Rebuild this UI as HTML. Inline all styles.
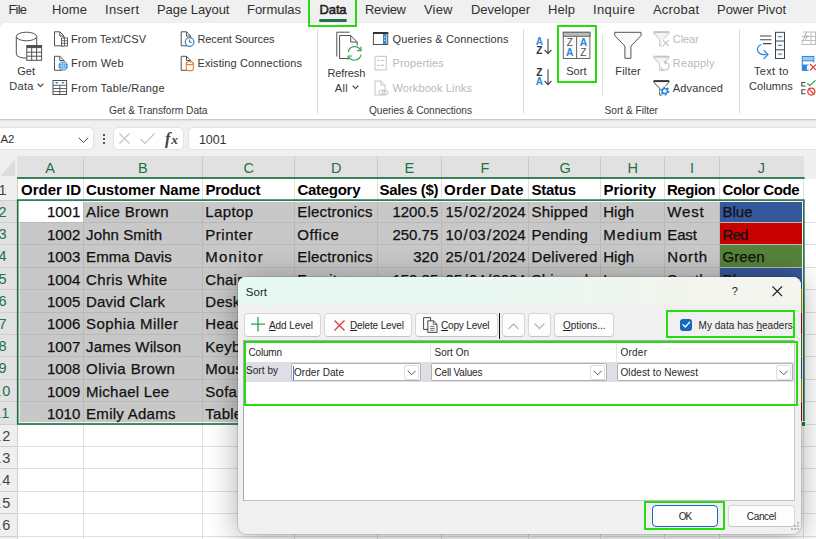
<!DOCTYPE html>
<html><head><meta charset="utf-8"><title>Excel Sort</title>
<style>
*{box-sizing:border-box;margin:0;padding:0}
html,body{width:816px;height:539px;overflow:hidden;background:#fff;font-family:"Liberation Sans",sans-serif}
#root{position:relative;width:816px;height:539px;overflow:hidden;background:#f0f0f0}
.a{position:absolute}
.t{position:absolute;white-space:pre;height:20px;line-height:20px}
svg{position:absolute;overflow:visible}
.tabbar{left:0;top:0;width:816px;height:24px;background:#f0f0f0}
.ribbon{left:0;top:23.2px;width:830px;height:95.8px;background:#fff;border-top-left-radius:5px;box-shadow:0 1px 2px rgba(0,0,0,.22)}
.vsep{width:1px;background:#dcdcdc}
.fbox{background:#fff;border:1px solid #e2e2e2;border-radius:5px;height:23px;top:127px}
.hl{border:2px solid #26dd0c}
/* grid */
.colh{top:156px;height:21px;background:#e1e1e1}
.rowh{left:0;width:17px;background:#e1e1e1}
.cell{position:absolute}
/* dialog */
.dlg{left:238px;top:276.8px;width:563px;height:257.5px;background:#f0f0f0;border-radius:8px;box-shadow:0 0 0 .6px rgba(0,0,0,.22),0 3px 30px 2px rgba(0,0,0,.30);overflow:hidden}
.btn{position:absolute;background:#fdfdfd;border:1px solid #d6d6d6;border-bottom-color:#c4c4c4;border-radius:4px}
.combo{position:absolute;background:#fff;border:1px solid #b0b0b0;border-radius:2px;height:18.3px;top:363px}
.combo i{position:absolute;right:.6px;top:.6px;bottom:.6px;width:15.6px;border:1px solid #dedede;border-radius:2px;background:#fff}
</style></head><body><div id="root">
<div class="a tabbar"></div>
<div class="a ribbon"></div>
<div class="a" style="left:319.1px;top:19.2px;width:28.4px;height:2.7px;border-radius:2px;background:#217346"></div>
<div class="a hl" style="left:308.4px;top:-4px;width:48.5px;height:30.7px"></div>
<div class="a vsep" style="left:317px;top:29px;height:85px"></div>
<div class="a vsep" style="left:523px;top:29px;height:85px"></div>
<div class="a vsep" style="left:739px;top:29px;height:85px"></div>
<div class="a vsep" style="left:602px;top:34px;height:61px;background:#e0e0e0"></div>
<div class="a hl" style="left:556.5px;top:25px;width:40.5px;height:58px"></div>
<svg style="left:37px;top:83.4px" width="7" height="4.6"><path d="M1 1 L3.5 3.6 L6 1" fill="none" stroke="#444" stroke-width="1.1" stroke-linecap="round" stroke-linejoin="round"/></svg>
<svg style="left:351.5px;top:85.4px" width="7" height="4.6"><path d="M1 1 L3.5 3.6 L6 1" fill="none" stroke="#444" stroke-width="1.1" stroke-linecap="round" stroke-linejoin="round"/></svg>
<svg style="left:0;top:0" width="816" height="120" viewBox="0 0 816 120"><path d="M16.3 36.5 V54 C16.3 59.5 36.7 59.5 36.7 54 V36.5" fill="#fff" stroke="#505050" stroke-width="1"/><ellipse cx="26.5" cy="36.5" rx="10.2" ry="4.3" fill="#fff" stroke="#505050" stroke-width="1"/><rect x="26.8" y="45.5" width="14.8" height="14.8" fill="#fff" stroke="#505050" stroke-width="1"/><rect x="26.8" y="45.5" width="14.8" height="2.6" fill="#505050"/><path d="M31.7 48 V60.3 M36.6 48 V60.3 M26.8 52.2 H41.6 M26.8 56.2 H41.6" stroke="#505050" stroke-width="1" fill="none"/><path d="M54.5 31.8 H59.8 L64.0 36.0 V45.8 H54.5 Z" fill="#fff" stroke="#505050" stroke-width="1" stroke-linejoin="round"/><path d="M59.8 31.8 V36.0 H64.0" fill="none" stroke="#505050" stroke-width="1" stroke-linejoin="round"/><rect x="61.5" y="38" width="6" height="8" fill="#fff" stroke="#505050" stroke-width=".9"/><path d="M61.5 40.7 H67.5 M61.5 43.3 H67.5 M64.5 38 V46" stroke="#505050" stroke-width=".8"/><path d="M54.5 56.3 H59.8 L64.0 60.5 V70.3 H54.5 Z" fill="#fff" stroke="#505050" stroke-width="1" stroke-linejoin="round"/><path d="M59.8 56.3 V60.5 H64.0" fill="none" stroke="#505050" stroke-width="1" stroke-linejoin="round"/><circle cx="63.2" cy="66" r="4.7" fill="#2b88d8"/><path d="M58.5 66 H67.9 M63.2 61.3 V70.7 M60 63.3 Q63.2 64.8 66.4 63.3 M60 68.7 Q63.2 67.2 66.4 68.7" stroke="#fff" stroke-width=".55" fill="none"/><ellipse cx="63.2" cy="66" rx="2.1" ry="4.7" fill="none" stroke="#fff" stroke-width=".55"/><rect x="53" y="80.5" width="13.6" height="14" fill="#fff" stroke="#505050" stroke-width="1"/><path d="M53 85.3 H66.6 M53 88.5 H66.6 M53 91.6 H66.6 M59.8 85.3 V94.5" stroke="#505050" stroke-width=".9"/><path d="M55 82 H58.2 L56.6 84 Z M61.4 82 H64.6 L63 84 Z" fill="#2b88d8"/><path d="M181.2 31.8 H186.5 L190.7 36.0 V45.8 H181.2 Z" fill="#fff" stroke="#505050" stroke-width="1" stroke-linejoin="round"/><path d="M186.5 31.8 V36.0 H190.7" fill="none" stroke="#505050" stroke-width="1" stroke-linejoin="round"/><circle cx="189.6" cy="42" r="4.3" fill="#fff" stroke="#2b88d8" stroke-width="1.2"/><path d="M189.6 39.5 V42.2 H191.8" stroke="#505050" stroke-width=".9" fill="none"/><path d="M181.2 56.3 H186.5 L190.7 60.5 V70.3 H181.2 Z" fill="#fff" stroke="#505050" stroke-width="1" stroke-linejoin="round"/><path d="M186.5 56.3 V60.5 H190.7" fill="none" stroke="#505050" stroke-width="1" stroke-linejoin="round"/><path d="M186.3 63.3 V69.3 C186.3 71.3 193.3 71.3 193.3 69.3 V63.3" fill="#fff" stroke="#e07b26" stroke-width="1.1"/><ellipse cx="189.8" cy="63.3" rx="3.5" ry="1.6" fill="#fff" stroke="#e07b26" stroke-width="1.1"/><path d="M336.8 56.5 V32.2 H349.5" fill="none" stroke="#505050" stroke-width="1"/><path d="M339.6 35.5 H350.70000000000005 L357.20000000000005 42.0 V58.5 H339.6 Z" fill="#fff" stroke="#505050" stroke-width="1" stroke-linejoin="round"/><path d="M350.70000000000005 35.5 V42.0 H357.20000000000005" fill="none" stroke="#505050" stroke-width="1" stroke-linejoin="round"/><circle cx="354.6" cy="53.3" r="8.3" fill="#fff"/><path d="M348.2 52 A6.6 6.6 0 0 1 360.6 50.2" fill="none" stroke="#37a556" stroke-width="1.2"/><path d="M361 46.5 V50.6 H357" fill="none" stroke="#37a556" stroke-width="1.2"/><path d="M361 54.6 A6.6 6.6 0 0 1 348.6 56.4" fill="none" stroke="#37a556" stroke-width="1.2"/><path d="M348.2 60.1 V56 H352.2" fill="none" stroke="#37a556" stroke-width="1.2"/><rect x="373.4" y="33" width="14.3" height="11.5" fill="#fff" stroke="#505050" stroke-width="1"/><rect x="373" y="32" width="15.2" height="2" fill="#333"/><rect x="383" y="34" width="3.4" height="10" fill="#2b88d8"/><path d="M384.7 36.5 V38 M384.7 39.6 V41" stroke="#fff" stroke-width=".9"/><rect x="375" y="56.3" width="11.2" height="13.6" fill="#fff" stroke="#c4c4c4" stroke-width="1"/><path d="M377.3 60.5 H379.5 M380.8 60.5 H384 M377.3 65.3 H379.5 M380.8 65.3 H384" stroke="#c4c4c4" stroke-width="1.2"/><path d="M375 81 H380.8 L385 85.2 V95 H375 Z" fill="#fff" stroke="#c4c4c4" stroke-width="1" stroke-linejoin="round"/><path d="M380.8 81 V85.2 H385" fill="none" stroke="#c4c4c4" stroke-width="1" stroke-linejoin="round"/><ellipse cx="381.5" cy="92.2" rx="3" ry="2.2" fill="#fff" stroke="#c4c4c4" stroke-width="1"/><ellipse cx="385" cy="92.6" rx="3" ry="2.2" fill="none" stroke="#c4c4c4" stroke-width="1"/><text x="539.4" y="45.4" font-family="Liberation Sans" font-size="10" font-weight="700" fill="#2b88d8" text-anchor="middle">A</text><text x="539.4" y="54" font-family="Liberation Sans" font-size="10" font-weight="700" fill="#333" text-anchor="middle">Z</text><path d="M548 38.7 V53.6 M544.6 50.0 L548 53.6 L551.4 50.0" fill="none" stroke="#444" stroke-width="1.1"/><text x="539.4" y="76" font-family="Liberation Sans" font-size="10" font-weight="700" fill="#333" text-anchor="middle">Z</text><text x="539.4" y="84.8" font-family="Liberation Sans" font-size="10" font-weight="700" fill="#2b88d8" text-anchor="middle">A</text><path d="M548 69.3 V84.6 M544.6 81.0 L548 84.6 L551.4 81.0" fill="none" stroke="#444" stroke-width="1.1"/><rect x="563.3" y="32.3" width="26.6" height="26.2" fill="#fafafa" stroke="#666" stroke-width="1"/><rect x="563.3" y="32.3" width="26.6" height="4" fill="#bcbcbc" stroke="#666" stroke-width="1"/><path d="M576.6 36.3 V58.5" stroke="#666" stroke-width="1"/><text x="569.8" y="46.3" font-family="Liberation Sans" font-size="10" font-weight="400" fill="#505050" text-anchor="middle">Z</text><text x="569.8" y="56.2" font-family="Liberation Sans" font-size="10.2" font-weight="700" fill="#2b88d8" text-anchor="middle">A</text><text x="583.4" y="46.3" font-family="Liberation Sans" font-size="10.2" font-weight="700" fill="#2b88d8" text-anchor="middle">A</text><text x="583.4" y="56.2" font-family="Liberation Sans" font-size="10" font-weight="400" fill="#505050" text-anchor="middle">Z</text><path d="M614.8 32.3 H641.0 V35.68 L630.913 46.08 V58.3 H624.887 V46.08 L614.8 35.68 Z" fill="#fafafa" stroke="#555" stroke-width="1" stroke-linejoin="round"/><path d="M654 31.8 H668.8 V33.646 L663.102 39.326 V46.0 H659.698 V39.326 L654 33.646 Z" fill="#f4f4f4" stroke="#c4c4c4" stroke-width="1" stroke-linejoin="round"/><path d="M653.6 32.2 H669.2" stroke="#c4c4c4" stroke-width="1.7"/><rect x="661.8" y="39.3" width="8" height="7.4" fill="#fff"/><path d="M663 40.2 L668.8 46 M668.8 40.2 L663 46" stroke="#c4c4c4" stroke-width="1.1"/><path d="M654 56.3 H668.8 V58.145999999999994 L663.102 63.82599999999999 V70.5 H659.698 V63.82599999999999 L654 58.145999999999994 Z" fill="#f4f4f4" stroke="#c4c4c4" stroke-width="1" stroke-linejoin="round"/><path d="M653.6 56.7 H669.2" stroke="#c4c4c4" stroke-width="1.7"/><circle cx="665" cy="66.2" r="4.8" fill="#fff"/><path d="M661.2 66.9 A3.9 3.9 0 1 0 665 62.3" fill="none" stroke="#c4c4c4" stroke-width="1.1"/><path d="M666 60.5 L664.2 62.4 L666.2 64" fill="none" stroke="#c4c4c4" stroke-width="1.1"/><path d="M654 80.8 H668.8 V82.646 L663.102 88.326 V95.0 H659.698 V88.326 L654 82.646 Z" fill="#fff" stroke="#444" stroke-width="1" stroke-linejoin="round"/><path d="M653.6 81.2 H669.2" stroke="#333" stroke-width="1.7"/><circle cx="664.8" cy="91" r="5.2" fill="#fff"/><circle cx="664.8" cy="91" r="3.5" fill="none" stroke="#2b88d8" stroke-width="2.2" stroke-dasharray="1.7 1.97"/><circle cx="664.8" cy="91" r="2.6" fill="none" stroke="#2b88d8" stroke-width="1.5"/><path d="M760 36 H771.4 M760 39.8 H771.4 M763 43.6 H771.4" stroke="#444" stroke-width="1.1"/><path d="M761.5 44.5 C755.5 47 755.5 55.2 766.8 54.6" fill="none" stroke="#2b88d8" stroke-width="1.2"/><path d="M763.6 50.3 L768 54.6 L763.6 59" fill="none" stroke="#2b88d8" stroke-width="1.2"/><rect x="775.5" y="32.3" width="9" height="26.2" fill="#fafafa" stroke="#444" stroke-width="1"/><path d="M775.5 41 H784.5 M775.5 49.8 H784.5" stroke="#444" stroke-width="1"/><path d="M778.3 36.7 H781.8 M778.3 45.4 H781.8 M778.3 54.2 H781.8" stroke="#2b88d8" stroke-width="1.3"/><path d="M801.5 44.5 H818 M801.5 40.5 H818 M801.5 36.5 H818 M806.5 32 L801.5 44.5 M811 32 V44.5 M815.5 32 V44.5 M803 32 H818" stroke="#bdbdbd" stroke-width="1" fill="none"/><path d="M803 37.5 L806.5 31.5 L806 35.5 L809 35 L805 41 L805.6 37 Z" fill="#bdbdbd"/><rect x="802.3" y="56.5" width="11.5" height="13.8" fill="#fff" stroke="#2b88d8" stroke-width="1.1"/><rect x="802.8" y="57" width="10.5" height="3.6" fill="#9ccaf0"/><path d="M802.3 60.8 H813.8 M802.3 65 H813.8" stroke="#2b88d8" stroke-width="1"/><rect x="802.3" y="65" width="4.6" height="5.3" fill="#2b88d8"/><rect x="808.6" y="62.6" width="9" height="9" fill="#fff"/><path d="M810 64 L816.5 70.5 M816.5 64 L810 70.5" stroke="#e53935" stroke-width="1.2"/><path d="M805.5 82.5 H801.8 V86 H805.5 M805.5 89.8 H801.8 V93.8 H805.5" fill="none" stroke="#444" stroke-width="1.1"/><path d="M807.3 83.3 L809.8 85.6 L815.5 80.2" fill="none" stroke="#35a44f" stroke-width="1.2"/><circle cx="811.3" cy="91.6" r="3.5" fill="#fff" stroke="#e53935" stroke-width="1.2"/><path d="M808.9 89.2 L813.7 94" stroke="#e53935" stroke-width="1.2"/></svg>
<div class="a fbox" style="left:-6px;width:100px"></div>
<div class="a fbox" style="left:113px;width:70.5px"></div>
<div class="a fbox" style="left:188px;width:640px"></div>
<svg style="left:78.3px;top:137.3px" width="11" height="6.5"><path d="M1 1 L5.5 5.5 L10 1" fill="none" stroke="#444" stroke-width="1" stroke-linecap="round" stroke-linejoin="round"/></svg>
<div class="a" style="left:102.5px;top:133.5px;width:2px;height:2px;background:#555"></div>
<div class="a" style="left:102.5px;top:137.5px;width:2px;height:2px;background:#555"></div>
<div class="a" style="left:102.5px;top:141.5px;width:2px;height:2px;background:#555"></div>
<svg style="left:119px;top:133px" width="11" height="11"><path d="M0.5 0.5 L10.5 10.5 M10.5 0.5 L0.5 10.5" stroke="#c2c2c2" stroke-width="1.1" fill="none"/></svg>
<svg style="left:140px;top:133px" width="15" height="11"><path d="M0.5 6 L5 10.5 L14.5 0.5" stroke="#c2c2c2" stroke-width="1.1" fill="none"/></svg>
<div class="a" style="left:17px;top:179px;width:800px;height:360px;background:#fff"></div>
<div class="a" style="left:0;top:156px;width:816px;height:23px;background:#efefef"></div>
<div class="a colh" style="left:17px;width:787.3px"></div>
<div class="a" style="left:0;top:156px;width:17px;height:23px;background:#efefef"></div>
<svg style="left:0;top:156px" width="17" height="22"><path d="M15 4 L15 20 L0 20 Z" fill="#dcdcdc"/></svg>
<div class="a" style="left:0;top:179px;width:17px;height:360px;background:#efefef"></div>
<div class="a rowh" style="top:200.0px;height:224.0px"></div>
<div class="a" style="left:16.5px;top:179px;width:1px;height:21px;background:#cfcfcf"></div>
<div class="a" style="left:16.5px;top:424.0px;width:1px;height:200px;background:#cfcfcf"></div>
<div class="a" style="left:18.4px;top:200.8px;width:784.5px;height:222.39999999999998px;background:#c8c8c8"></div>
<div class="a" style="left:18.4px;top:200.8px;width:64.4px;height:21.099999999999994px;background:#fff"></div>
<div class="a" style="left:719.6px;top:201.9px;width:82.29999999999995px;height:20.5px;background:#35589a"></div>
<div class="a" style="left:719.6px;top:222.4px;width:82.29999999999995px;height:22.400000000000006px;background:#c70000"></div>
<div class="a" style="left:719.6px;top:244.8px;width:82.29999999999995px;height:22.399999999999977px;background:#56833a"></div>
<div class="a" style="left:719.6px;top:267.2px;width:82.29999999999995px;height:22.400000000000034px;background:#35589a"></div>
<div class="a" style="left:719.6px;top:289.6px;width:82.29999999999995px;height:22.399999999999977px;background:#c79a00"></div>
<div class="a" style="left:719.6px;top:312.0px;width:82.29999999999995px;height:22.399999999999977px;background:#c70000"></div>
<div class="a" style="left:719.6px;top:334.4px;width:82.29999999999995px;height:22.399999999999977px;background:#56833a"></div>
<div class="a" style="left:719.6px;top:356.79999999999995px;width:82.29999999999995px;height:22.400000000000034px;background:#35589a"></div>
<div class="a" style="left:719.6px;top:379.2px;width:82.29999999999995px;height:22.400000000000034px;background:#c79a00"></div>
<div class="a" style="left:719.6px;top:401.6px;width:82.29999999999995px;height:20.599999999999966px;background:#c70000"></div>
<div class="a" style="left:82.8px;top:179px;width:1px;height:21px;background:#e0e0e0"></div>
<div class="a" style="left:82.8px;top:201.0px;width:1px;height:222.0px;background:#b9b9b9"></div>
<div class="a" style="left:82.8px;top:425.0px;width:1px;height:200px;background:#e0e0e0"></div>
<div class="a" style="left:82.8px;top:157px;width:1px;height:20px;background:#c8c8c8"></div>
<div class="a" style="left:202.0px;top:179px;width:1px;height:21px;background:#e0e0e0"></div>
<div class="a" style="left:202.0px;top:201.0px;width:1px;height:222.0px;background:#b9b9b9"></div>
<div class="a" style="left:202.0px;top:425.0px;width:1px;height:200px;background:#e0e0e0"></div>
<div class="a" style="left:202.0px;top:157px;width:1px;height:20px;background:#c8c8c8"></div>
<div class="a" style="left:294.0px;top:179px;width:1px;height:21px;background:#e0e0e0"></div>
<div class="a" style="left:294.0px;top:201.0px;width:1px;height:222.0px;background:#b9b9b9"></div>
<div class="a" style="left:294.0px;top:425.0px;width:1px;height:200px;background:#e0e0e0"></div>
<div class="a" style="left:294.0px;top:157px;width:1px;height:20px;background:#c8c8c8"></div>
<div class="a" style="left:376.8px;top:179px;width:1px;height:21px;background:#e0e0e0"></div>
<div class="a" style="left:376.8px;top:201.0px;width:1px;height:222.0px;background:#b9b9b9"></div>
<div class="a" style="left:376.8px;top:425.0px;width:1px;height:200px;background:#e0e0e0"></div>
<div class="a" style="left:376.8px;top:157px;width:1px;height:20px;background:#c8c8c8"></div>
<div class="a" style="left:440.8px;top:179px;width:1px;height:21px;background:#e0e0e0"></div>
<div class="a" style="left:440.8px;top:201.0px;width:1px;height:222.0px;background:#b9b9b9"></div>
<div class="a" style="left:440.8px;top:425.0px;width:1px;height:200px;background:#e0e0e0"></div>
<div class="a" style="left:440.8px;top:157px;width:1px;height:20px;background:#c8c8c8"></div>
<div class="a" style="left:528.2px;top:179px;width:1px;height:21px;background:#e0e0e0"></div>
<div class="a" style="left:528.2px;top:201.0px;width:1px;height:222.0px;background:#b9b9b9"></div>
<div class="a" style="left:528.2px;top:425.0px;width:1px;height:200px;background:#e0e0e0"></div>
<div class="a" style="left:528.2px;top:157px;width:1px;height:20px;background:#c8c8c8"></div>
<div class="a" style="left:600.0px;top:179px;width:1px;height:21px;background:#e0e0e0"></div>
<div class="a" style="left:600.0px;top:201.0px;width:1px;height:222.0px;background:#b9b9b9"></div>
<div class="a" style="left:600.0px;top:425.0px;width:1px;height:200px;background:#e0e0e0"></div>
<div class="a" style="left:600.0px;top:157px;width:1px;height:20px;background:#c8c8c8"></div>
<div class="a" style="left:664.0px;top:179px;width:1px;height:21px;background:#e0e0e0"></div>
<div class="a" style="left:664.0px;top:201.0px;width:1px;height:222.0px;background:#b9b9b9"></div>
<div class="a" style="left:664.0px;top:425.0px;width:1px;height:200px;background:#e0e0e0"></div>
<div class="a" style="left:664.0px;top:157px;width:1px;height:20px;background:#c8c8c8"></div>
<div class="a" style="left:719.1px;top:179px;width:1px;height:21px;background:#e0e0e0"></div>
<div class="a" style="left:719.1px;top:201.0px;width:1px;height:222.0px;background:#b9b9b9"></div>
<div class="a" style="left:719.1px;top:425.0px;width:1px;height:200px;background:#e0e0e0"></div>
<div class="a" style="left:719.1px;top:157px;width:1px;height:20px;background:#c8c8c8"></div>
<div class="a" style="left:802.8px;top:157px;width:1px;height:400px;background:#e0e0e0"></div>
<div class="a" style="left:17px;top:221.9px;width:786.3px;height:1px;background:#b9b9b9"></div>
<div class="a" style="left:803.3px;top:221.9px;width:20px;height:1px;background:#e0e0e0"></div>
<div class="a" style="left:0;top:221.9px;width:17px;height:1px;background:#cfcfcf"></div>
<div class="a" style="left:17px;top:244.3px;width:786.3px;height:1px;background:#b9b9b9"></div>
<div class="a" style="left:803.3px;top:244.3px;width:20px;height:1px;background:#e0e0e0"></div>
<div class="a" style="left:0;top:244.3px;width:17px;height:1px;background:#cfcfcf"></div>
<div class="a" style="left:17px;top:266.7px;width:786.3px;height:1px;background:#b9b9b9"></div>
<div class="a" style="left:803.3px;top:266.7px;width:20px;height:1px;background:#e0e0e0"></div>
<div class="a" style="left:0;top:266.7px;width:17px;height:1px;background:#cfcfcf"></div>
<div class="a" style="left:17px;top:289.1px;width:786.3px;height:1px;background:#b9b9b9"></div>
<div class="a" style="left:803.3px;top:289.1px;width:20px;height:1px;background:#e0e0e0"></div>
<div class="a" style="left:0;top:289.1px;width:17px;height:1px;background:#cfcfcf"></div>
<div class="a" style="left:17px;top:311.5px;width:786.3px;height:1px;background:#b9b9b9"></div>
<div class="a" style="left:803.3px;top:311.5px;width:20px;height:1px;background:#e0e0e0"></div>
<div class="a" style="left:0;top:311.5px;width:17px;height:1px;background:#cfcfcf"></div>
<div class="a" style="left:17px;top:333.9px;width:786.3px;height:1px;background:#b9b9b9"></div>
<div class="a" style="left:803.3px;top:333.9px;width:20px;height:1px;background:#e0e0e0"></div>
<div class="a" style="left:0;top:333.9px;width:17px;height:1px;background:#cfcfcf"></div>
<div class="a" style="left:17px;top:356.29999999999995px;width:786.3px;height:1px;background:#b9b9b9"></div>
<div class="a" style="left:803.3px;top:356.29999999999995px;width:20px;height:1px;background:#e0e0e0"></div>
<div class="a" style="left:0;top:356.29999999999995px;width:17px;height:1px;background:#cfcfcf"></div>
<div class="a" style="left:17px;top:378.7px;width:786.3px;height:1px;background:#b9b9b9"></div>
<div class="a" style="left:803.3px;top:378.7px;width:20px;height:1px;background:#e0e0e0"></div>
<div class="a" style="left:0;top:378.7px;width:17px;height:1px;background:#cfcfcf"></div>
<div class="a" style="left:17px;top:401.1px;width:786.3px;height:1px;background:#b9b9b9"></div>
<div class="a" style="left:803.3px;top:401.1px;width:20px;height:1px;background:#e0e0e0"></div>
<div class="a" style="left:0;top:401.1px;width:17px;height:1px;background:#cfcfcf"></div>
<div class="a" style="left:17px;top:423.5px;width:800px;height:1px;background:#e0e0e0"></div>
<div class="a" style="left:0;top:423.5px;width:17px;height:1px;background:#cfcfcf"></div>
<div class="a" style="left:17px;top:445.9px;width:800px;height:1px;background:#e0e0e0"></div>
<div class="a" style="left:0;top:445.9px;width:17px;height:1px;background:#cfcfcf"></div>
<div class="a" style="left:17px;top:468.29999999999995px;width:800px;height:1px;background:#e0e0e0"></div>
<div class="a" style="left:0;top:468.29999999999995px;width:17px;height:1px;background:#cfcfcf"></div>
<div class="a" style="left:17px;top:490.7px;width:800px;height:1px;background:#e0e0e0"></div>
<div class="a" style="left:0;top:490.7px;width:17px;height:1px;background:#cfcfcf"></div>
<div class="a" style="left:17px;top:513.0999999999999px;width:800px;height:1px;background:#e0e0e0"></div>
<div class="a" style="left:0;top:513.0999999999999px;width:17px;height:1px;background:#cfcfcf"></div>
<div class="a" style="left:17px;top:535.5px;width:800px;height:1px;background:#e0e0e0"></div>
<div class="a" style="left:0;top:535.5px;width:17px;height:1px;background:#cfcfcf"></div>
<div class="a" style="left:0;top:199.5px;width:17px;height:1px;background:#cfcfcf"></div>
<svg style="left:0;top:0" width="816" height="200"><rect x="17" y="177.1" width="787.6" height="1.75" fill="#217346"/></svg>
<svg style="left:0;top:0" width="816" height="539"><rect x="19.0" y="201.4" width="783.55" height="221.3" fill="none" stroke="#fff" stroke-width="1"/><rect x="17.7" y="200.1" width="786.15" height="223.9" fill="none" stroke="#217346" stroke-width="1.65"/></svg>
<div class="a" style="left:800.6px;top:421.2px;width:5.6px;height:5.6px;background:#217346;border:1px solid #fff"></div>
<div class="t" style="left:8.50px;top:0px;font-size:13px;color:#303030;letter-spacing:-0.818px;">File</div>
<div class="t" style="left:52.00px;top:0px;font-size:13px;color:#303030;letter-spacing:0.104px;">Home</div>
<div class="t" style="left:105.00px;top:0px;font-size:13px;color:#303030;letter-spacing:0.297px;">Insert</div>
<div class="t" style="left:157.00px;top:0px;font-size:13px;color:#303030;letter-spacing:-0.052px;">Page Layout</div>
<div class="t" style="left:247.00px;top:0px;font-size:13px;color:#303030;letter-spacing:-0.027px;">Formulas</div>
<div class="t" style="left:365.00px;top:0px;font-size:13px;color:#303030;letter-spacing:-0.325px;">Review</div>
<div class="t" style="left:424.00px;top:0px;font-size:13px;color:#303030;letter-spacing:0.182px;">View</div>
<div class="t" style="left:471.00px;top:0px;font-size:13px;color:#303030;letter-spacing:-0.033px;">Developer</div>
<div class="t" style="left:548.00px;top:0px;font-size:13px;color:#303030;letter-spacing:0.083px;">Help</div>
<div class="t" style="left:593.00px;top:0px;font-size:13px;color:#303030;letter-spacing:0.375px;">Inquire</div>
<div class="t" style="left:653.00px;top:0px;font-size:13px;color:#303030;letter-spacing:0.198px;">Acrobat</div>
<div class="t" style="left:717.00px;top:0px;font-size:13px;color:#303030;letter-spacing:-0.037px;">Power Pivot</div>
<div class="t" style="left:319.60px;top:0px;font-size:13px;color:#1e1e1e;letter-spacing:-0.156px;-webkit-text-stroke:.55px #1e1e1e;">Data</div>
<div class="t" style="left:17.20px;top:61px;font-size:11px;color:#363636;letter-spacing:0.033px;">Get</div>
<div class="t" style="left:9.20px;top:76px;font-size:11px;color:#363636;letter-spacing:0.350px;">Data</div>
<div class="t" style="left:71.00px;top:29px;font-size:11px;color:#363636;letter-spacing:0.052px;">From Text/CSV</div>
<div class="t" style="left:71.00px;top:53px;font-size:11px;color:#363636;letter-spacing:0.194px;">From Web</div>
<div class="t" style="left:71.00px;top:78px;font-size:11px;color:#363636;letter-spacing:0.214px;">From Table/Range</div>
<div class="t" style="left:197.50px;top:29px;font-size:11px;color:#363636;letter-spacing:-0.097px;">Recent Sources</div>
<div class="t" style="left:197.50px;top:53px;font-size:11px;color:#363636;letter-spacing:0.093px;">Existing Connections</div>
<div class="t" style="left:109.00px;top:101px;font-size:10.2px;color:#3a3a3a;letter-spacing:-0.031px;">Get &amp; Transform Data</div>
<div class="t" style="left:327.50px;top:63px;font-size:11px;color:#363636;letter-spacing:-0.122px;">Refresh</div>
<div class="t" style="left:334.70px;top:78px;font-size:11px;color:#363636;letter-spacing:0.383px;">All</div>
<div class="t" style="left:392.50px;top:29px;font-size:11px;color:#363636;letter-spacing:0.144px;">Queries &amp; Connections</div>
<div class="t" style="left:392.50px;top:53px;font-size:11px;color:#bababa;letter-spacing:0.118px;">Properties</div>
<div class="t" style="left:392.50px;top:78px;font-size:11px;color:#bababa;letter-spacing:0.111px;">Workbook Links</div>
<div class="t" style="left:369.00px;top:101px;font-size:10.2px;color:#3a3a3a;letter-spacing:-0.088px;">Queries &amp; Connections</div>
<div class="t" style="left:566.20px;top:61px;font-size:11px;color:#363636;letter-spacing:0.071px;">Sort</div>
<div class="t" style="left:615.30px;top:61px;font-size:11px;color:#363636;letter-spacing:0.189px;">Filter</div>
<div class="t" style="left:672.80px;top:29px;font-size:11px;color:#bababa;letter-spacing:-0.099px;">Clear</div>
<div class="t" style="left:672.80px;top:53px;font-size:11px;color:#bababa;letter-spacing:0.207px;">Reapply</div>
<div class="t" style="left:672.80px;top:78px;font-size:11px;color:#363636;letter-spacing:0.180px;">Advanced</div>
<div class="t" style="left:604.50px;top:101px;font-size:10.2px;color:#3a3a3a;letter-spacing:-0.023px;">Sort &amp; Filter</div>
<div class="t" style="left:754.00px;top:61px;font-size:11px;color:#363636;letter-spacing:0.332px;">Text to</div>
<div class="t" style="left:749.00px;top:76px;font-size:11px;color:#363636;letter-spacing:0.049px;">Columns</div>
<div class="t" style="left:0.50px;top:129px;font-size:11.5px;color:#333;letter-spacing:-0.078px;">A2</div>
<div class="t" style="left:199.00px;top:130px;font-size:12.5px;color:#333;letter-spacing:-0.104px;">1001</div>
<div class="t" style="left:165.00px;top:129px;font-size:16.5px;font-weight:700;color:#444;font-family:'Liberation Serif',serif;font-style:italic;">f</div>
<div class="t" style="left:171.30px;top:130px;font-size:13.5px;font-weight:700;color:#444;font-family:'Liberation Serif',serif;font-style:italic;">x</div>
<div class="t" style="left:45.15px;top:158px;font-size:14.5px;color:#217346;width:10px;text-align:center;">A</div>
<div class="t" style="left:137.90px;top:158px;font-size:14.5px;color:#217346;width:10px;text-align:center;">B</div>
<div class="t" style="left:243.50px;top:158px;font-size:14.5px;color:#217346;width:10px;text-align:center;">C</div>
<div class="t" style="left:330.90px;top:158px;font-size:14.5px;color:#217346;width:10px;text-align:center;">D</div>
<div class="t" style="left:404.30px;top:158px;font-size:14.5px;color:#217346;width:10px;text-align:center;">E</div>
<div class="t" style="left:480.00px;top:158px;font-size:14.5px;color:#217346;width:10px;text-align:center;">F</div>
<div class="t" style="left:559.60px;top:158px;font-size:14.5px;color:#217346;width:10px;text-align:center;">G</div>
<div class="t" style="left:627.50px;top:158px;font-size:14.5px;color:#217346;width:10px;text-align:center;">H</div>
<div class="t" style="left:687.05px;top:158px;font-size:14.5px;color:#217346;width:10px;text-align:center;">I</div>
<div class="t" style="left:756.45px;top:158px;font-size:14.5px;color:#217346;width:10px;text-align:center;">J</div>
<div class="t" style="left:-1.60px;top:180px;font-size:14.5px;color:#444;letter-spacing:1.2px;">1</div>
<div class="t" style="left:-1.60px;top:202px;font-size:14.5px;color:#217346;letter-spacing:1.2px;">2</div>
<div class="t" style="left:-1.60px;top:224px;font-size:14.5px;color:#217346;letter-spacing:1.2px;">3</div>
<div class="t" style="left:-1.60px;top:246px;font-size:14.5px;color:#217346;letter-spacing:1.2px;">4</div>
<div class="t" style="left:-1.60px;top:269px;font-size:14.5px;color:#217346;letter-spacing:1.2px;">5</div>
<div class="t" style="left:-1.60px;top:291px;font-size:14.5px;color:#217346;letter-spacing:1.2px;">6</div>
<div class="t" style="left:-1.60px;top:314px;font-size:14.5px;color:#217346;letter-spacing:1.2px;">7</div>
<div class="t" style="left:-1.60px;top:336px;font-size:14.5px;color:#217346;letter-spacing:1.2px;">8</div>
<div class="t" style="left:-1.60px;top:358px;font-size:14.5px;color:#217346;letter-spacing:1.2px;">9</div>
<div class="t" style="left:-6.90px;top:381px;font-size:14.5px;color:#217346;letter-spacing:1.2px;">10</div>
<div class="t" style="left:-6.90px;top:403px;font-size:14.5px;color:#217346;letter-spacing:1.2px;">11</div>
<div class="t" style="left:-6.90px;top:426px;font-size:14.5px;color:#444;letter-spacing:1.2px;">12</div>
<div class="t" style="left:-6.90px;top:448px;font-size:14.5px;color:#444;letter-spacing:1.2px;">13</div>
<div class="t" style="left:-6.90px;top:470px;font-size:14.5px;color:#444;letter-spacing:1.2px;">14</div>
<div class="t" style="left:-6.90px;top:493px;font-size:14.5px;color:#444;letter-spacing:1.2px;">15</div>
<div class="t" style="left:-6.90px;top:515px;font-size:14.5px;color:#444;letter-spacing:1.2px;">16</div>
<div class="t" style="left:21.00px;top:180px;font-size:15px;font-weight:700;color:#000;">Order ID</div>
<div class="t" style="left:86.00px;top:180px;font-size:15px;font-weight:700;color:#000;letter-spacing:-0.087px;">Customer Name</div>
<div class="t" style="left:205.50px;top:180px;font-size:15px;font-weight:700;color:#000;letter-spacing:-0.279px;">Product</div>
<div class="t" style="left:297.50px;top:180px;font-size:15px;font-weight:700;color:#000;letter-spacing:-0.290px;">Category</div>
<div class="t" style="left:379.50px;top:180px;font-size:15px;font-weight:700;color:#000;letter-spacing:-0.338px;">Sales ($)</div>
<div class="t" style="left:444.00px;top:180px;font-size:15px;font-weight:700;color:#000;letter-spacing:0.219px;">Order Date</div>
<div class="t" style="left:531.50px;top:180px;font-size:15px;font-weight:700;color:#000;letter-spacing:-0.269px;">Status</div>
<div class="t" style="left:603.50px;top:180px;font-size:15px;font-weight:700;color:#000;">Priority</div>
<div class="t" style="left:667.00px;top:180px;font-size:15px;font-weight:700;color:#000;letter-spacing:-0.469px;">Region</div>
<div class="t" style="left:722.50px;top:180px;font-size:15px;font-weight:700;color:#000;letter-spacing:-0.427px;">Color Code</div>
<div class="t" style="left:-23.00px;top:202px;font-size:15px;color:#111;width:103.3px;text-align:right;letter-spacing:0.0px;-webkit-text-stroke:.25px #111;">1001</div>
<div class="t" style="left:86.10px;top:202px;font-size:15px;color:#111;letter-spacing:0.330px;-webkit-text-stroke:.25px #111;">Alice Brown</div>
<div class="t" style="left:205.30px;top:202px;font-size:15px;color:#111;letter-spacing:0.402px;-webkit-text-stroke:.25px #111;">Laptop</div>
<div class="t" style="left:297.30px;top:202px;font-size:15px;color:#111;letter-spacing:0.174px;-webkit-text-stroke:.25px #111;">Electronics</div>
<div class="t" style="left:337.30px;top:202px;font-size:15px;color:#111;width:101.0px;text-align:right;letter-spacing:0.0px;-webkit-text-stroke:.25px #111;">1200.5</div>
<div class="t" style="left:401.30px;top:202px;font-size:15px;color:#111;width:124.40000000000003px;text-align:right;letter-spacing:0.0px;-webkit-text-stroke:.25px #111;">15<span style="padding:0 1.25px">/</span>02<span style="padding:0 1.25px">/</span>2024</div>
<div class="t" style="left:531.50px;top:202px;font-size:15px;color:#111;letter-spacing:0.206px;-webkit-text-stroke:.25px #111;">Shipped</div>
<div class="t" style="left:603.30px;top:202px;font-size:15px;color:#111;letter-spacing:-0.020px;-webkit-text-stroke:.25px #111;">High</div>
<div class="t" style="left:667.30px;top:202px;font-size:15px;color:#111;letter-spacing:0.865px;-webkit-text-stroke:.25px #111;">West</div>
<div class="t" style="left:722.40px;top:202px;font-size:15px;color:#111;letter-spacing:0.023px;-webkit-text-stroke:.25px #111;">Blue</div>
<div class="t" style="left:-23.00px;top:225px;font-size:15px;color:#111;width:103.3px;text-align:right;letter-spacing:0.0px;-webkit-text-stroke:.25px #111;">1002</div>
<div class="t" style="left:86.10px;top:225px;font-size:15px;color:#111;letter-spacing:0.095px;-webkit-text-stroke:.25px #111;">John Smith</div>
<div class="t" style="left:205.30px;top:225px;font-size:15px;color:#111;letter-spacing:0.519px;-webkit-text-stroke:.25px #111;">Printer</div>
<div class="t" style="left:297.30px;top:225px;font-size:15px;color:#111;letter-spacing:0.519px;-webkit-text-stroke:.25px #111;">Office</div>
<div class="t" style="left:337.30px;top:225px;font-size:15px;color:#111;width:101.0px;text-align:right;letter-spacing:0.0px;-webkit-text-stroke:.25px #111;">250.75</div>
<div class="t" style="left:401.30px;top:225px;font-size:15px;color:#111;width:124.40000000000003px;text-align:right;letter-spacing:0.0px;-webkit-text-stroke:.25px #111;">10<span style="padding:0 1.25px">/</span>03<span style="padding:0 1.25px">/</span>2024</div>
<div class="t" style="left:531.50px;top:225px;font-size:15px;color:#111;letter-spacing:0.206px;-webkit-text-stroke:.25px #111;">Pending</div>
<div class="t" style="left:603.30px;top:225px;font-size:15px;color:#111;letter-spacing:0.988px;-webkit-text-stroke:.25px #111;">Medium</div>
<div class="t" style="left:667.30px;top:225px;font-size:15px;color:#111;letter-spacing:-0.139px;-webkit-text-stroke:.25px #111;">East</div>
<div class="t" style="left:722.40px;top:225px;font-size:15px;color:#111;letter-spacing:-0.766px;-webkit-text-stroke:.25px #111;">Red</div>
<div class="t" style="left:-23.00px;top:247px;font-size:15px;color:#111;width:103.3px;text-align:right;letter-spacing:0.0px;-webkit-text-stroke:.25px #111;">1003</div>
<div class="t" style="left:86.10px;top:247px;font-size:15px;color:#111;letter-spacing:0.065px;-webkit-text-stroke:.25px #111;">Emma Davis</div>
<div class="t" style="left:205.30px;top:247px;font-size:15px;color:#111;letter-spacing:1.228px;-webkit-text-stroke:.25px #111;">Monitor</div>
<div class="t" style="left:297.30px;top:247px;font-size:15px;color:#111;letter-spacing:0.174px;-webkit-text-stroke:.25px #111;">Electronics</div>
<div class="t" style="left:337.30px;top:247px;font-size:15px;color:#111;width:101.0px;text-align:right;letter-spacing:0.0px;-webkit-text-stroke:.25px #111;">320</div>
<div class="t" style="left:401.30px;top:247px;font-size:15px;color:#111;width:124.40000000000003px;text-align:right;letter-spacing:0.0px;-webkit-text-stroke:.25px #111;">25<span style="padding:0 1.25px">/</span>01<span style="padding:0 1.25px">/</span>2024</div>
<div class="t" style="left:531.50px;top:247px;font-size:15px;color:#111;letter-spacing:0.316px;-webkit-text-stroke:.25px #111;">Delivered</div>
<div class="t" style="left:603.30px;top:247px;font-size:15px;color:#111;letter-spacing:-0.020px;-webkit-text-stroke:.25px #111;">High</div>
<div class="t" style="left:667.30px;top:247px;font-size:15px;color:#111;letter-spacing:0.803px;-webkit-text-stroke:.25px #111;">North</div>
<div class="t" style="left:722.40px;top:247px;font-size:15px;color:#111;letter-spacing:0.099px;-webkit-text-stroke:.25px #111;">Green</div>
<div class="t" style="left:-23.00px;top:270px;font-size:15px;color:#111;width:103.3px;text-align:right;letter-spacing:0.0px;-webkit-text-stroke:.25px #111;">1004</div>
<div class="t" style="left:86.10px;top:270px;font-size:15px;color:#111;letter-spacing:0.358px;-webkit-text-stroke:.25px #111;">Chris White</div>
<div class="t" style="left:205.30px;top:270px;font-size:15px;color:#111;letter-spacing:0.25px;-webkit-text-stroke:.25px #111;">Chair</div>
<div class="t" style="left:297.30px;top:270px;font-size:15px;color:#111;letter-spacing:0.25px;-webkit-text-stroke:.25px #111;">Furniture</div>
<div class="t" style="left:337.30px;top:270px;font-size:15px;color:#111;width:101.0px;text-align:right;letter-spacing:0.0px;-webkit-text-stroke:.25px #111;">150.25</div>
<div class="t" style="left:401.30px;top:270px;font-size:15px;color:#111;width:124.40000000000003px;text-align:right;letter-spacing:0.0px;-webkit-text-stroke:.25px #111;">05<span style="padding:0 1.25px">/</span>04<span style="padding:0 1.25px">/</span>2024</div>
<div class="t" style="left:531.50px;top:270px;font-size:15px;color:#111;letter-spacing:0.25px;-webkit-text-stroke:.25px #111;">Shipped</div>
<div class="t" style="left:603.30px;top:270px;font-size:15px;color:#111;letter-spacing:0.25px;-webkit-text-stroke:.25px #111;">Low</div>
<div class="t" style="left:667.30px;top:270px;font-size:15px;color:#111;letter-spacing:0.25px;-webkit-text-stroke:.25px #111;">South</div>
<div class="t" style="left:722.40px;top:270px;font-size:15px;color:#111;letter-spacing:0.25px;-webkit-text-stroke:.25px #111;">Blue</div>
<div class="t" style="left:-23.00px;top:292px;font-size:15px;color:#111;width:103.3px;text-align:right;letter-spacing:0.0px;-webkit-text-stroke:.25px #111;">1005</div>
<div class="t" style="left:86.10px;top:292px;font-size:15px;color:#111;letter-spacing:0.147px;-webkit-text-stroke:.25px #111;">David Clark</div>
<div class="t" style="left:205.30px;top:292px;font-size:15px;color:#111;letter-spacing:0.25px;-webkit-text-stroke:.25px #111;">Desk</div>
<div class="t" style="left:297.30px;top:292px;font-size:15px;color:#111;letter-spacing:0.25px;-webkit-text-stroke:.25px #111;">Furniture</div>
<div class="t" style="left:337.30px;top:292px;font-size:15px;color:#111;width:101.0px;text-align:right;letter-spacing:0.0px;-webkit-text-stroke:.25px #111;">450</div>
<div class="t" style="left:401.30px;top:292px;font-size:15px;color:#111;width:124.40000000000003px;text-align:right;letter-spacing:0.0px;-webkit-text-stroke:.25px #111;">12<span style="padding:0 1.25px">/</span>02<span style="padding:0 1.25px">/</span>2024</div>
<div class="t" style="left:531.50px;top:292px;font-size:15px;color:#111;letter-spacing:0.25px;-webkit-text-stroke:.25px #111;">Pending</div>
<div class="t" style="left:603.30px;top:292px;font-size:15px;color:#111;letter-spacing:0.25px;-webkit-text-stroke:.25px #111;">Medium</div>
<div class="t" style="left:667.30px;top:292px;font-size:15px;color:#111;letter-spacing:0.25px;-webkit-text-stroke:.25px #111;">East</div>
<div class="t" style="left:722.40px;top:292px;font-size:15px;color:#111;letter-spacing:0.25px;-webkit-text-stroke:.25px #111;">Yellow</div>
<div class="t" style="left:-23.00px;top:314px;font-size:15px;color:#111;width:103.3px;text-align:right;letter-spacing:0.0px;-webkit-text-stroke:.25px #111;">1006</div>
<div class="t" style="left:86.10px;top:314px;font-size:15px;color:#111;letter-spacing:0.432px;-webkit-text-stroke:.25px #111;">Sophia Miller</div>
<div class="t" style="left:205.30px;top:314px;font-size:15px;color:#111;letter-spacing:0.25px;-webkit-text-stroke:.25px #111;">Headphones</div>
<div class="t" style="left:297.30px;top:314px;font-size:15px;color:#111;letter-spacing:0.25px;-webkit-text-stroke:.25px #111;">Electronics</div>
<div class="t" style="left:337.30px;top:314px;font-size:15px;color:#111;width:101.0px;text-align:right;letter-spacing:0.0px;-webkit-text-stroke:.25px #111;">85.5</div>
<div class="t" style="left:401.30px;top:314px;font-size:15px;color:#111;width:124.40000000000003px;text-align:right;letter-spacing:0.0px;-webkit-text-stroke:.25px #111;">20<span style="padding:0 1.25px">/</span>03<span style="padding:0 1.25px">/</span>2024</div>
<div class="t" style="left:531.50px;top:314px;font-size:15px;color:#111;letter-spacing:0.25px;-webkit-text-stroke:.25px #111;">Delivered</div>
<div class="t" style="left:603.30px;top:314px;font-size:15px;color:#111;letter-spacing:0.25px;-webkit-text-stroke:.25px #111;">High</div>
<div class="t" style="left:667.30px;top:314px;font-size:15px;color:#111;letter-spacing:0.25px;-webkit-text-stroke:.25px #111;">West</div>
<div class="t" style="left:722.40px;top:314px;font-size:15px;color:#111;letter-spacing:0.25px;-webkit-text-stroke:.25px #111;">Red</div>
<div class="t" style="left:-23.00px;top:337px;font-size:15px;color:#111;width:103.3px;text-align:right;letter-spacing:0.0px;-webkit-text-stroke:.25px #111;">1007</div>
<div class="t" style="left:86.10px;top:337px;font-size:15px;color:#111;letter-spacing:0.149px;-webkit-text-stroke:.25px #111;">James Wilson</div>
<div class="t" style="left:205.30px;top:337px;font-size:15px;color:#111;letter-spacing:0.25px;-webkit-text-stroke:.25px #111;">Keyboard</div>
<div class="t" style="left:297.30px;top:337px;font-size:15px;color:#111;letter-spacing:0.25px;-webkit-text-stroke:.25px #111;">Electronics</div>
<div class="t" style="left:337.30px;top:337px;font-size:15px;color:#111;width:101.0px;text-align:right;letter-spacing:0.0px;-webkit-text-stroke:.25px #111;">45.99</div>
<div class="t" style="left:401.30px;top:337px;font-size:15px;color:#111;width:124.40000000000003px;text-align:right;letter-spacing:0.0px;-webkit-text-stroke:.25px #111;">08<span style="padding:0 1.25px">/</span>01<span style="padding:0 1.25px">/</span>2024</div>
<div class="t" style="left:531.50px;top:337px;font-size:15px;color:#111;letter-spacing:0.25px;-webkit-text-stroke:.25px #111;">Shipped</div>
<div class="t" style="left:603.30px;top:337px;font-size:15px;color:#111;letter-spacing:0.25px;-webkit-text-stroke:.25px #111;">Low</div>
<div class="t" style="left:667.30px;top:337px;font-size:15px;color:#111;letter-spacing:0.25px;-webkit-text-stroke:.25px #111;">North</div>
<div class="t" style="left:722.40px;top:337px;font-size:15px;color:#111;letter-spacing:0.25px;-webkit-text-stroke:.25px #111;">Green</div>
<div class="t" style="left:-23.00px;top:359px;font-size:15px;color:#111;width:103.3px;text-align:right;letter-spacing:0.0px;-webkit-text-stroke:.25px #111;">1008</div>
<div class="t" style="left:86.10px;top:359px;font-size:15px;color:#111;letter-spacing:0.409px;-webkit-text-stroke:.25px #111;">Olivia Brown</div>
<div class="t" style="left:205.30px;top:359px;font-size:15px;color:#111;letter-spacing:0.25px;-webkit-text-stroke:.25px #111;">Mouse</div>
<div class="t" style="left:297.30px;top:359px;font-size:15px;color:#111;letter-spacing:0.25px;-webkit-text-stroke:.25px #111;">Electronics</div>
<div class="t" style="left:337.30px;top:359px;font-size:15px;color:#111;width:101.0px;text-align:right;letter-spacing:0.0px;-webkit-text-stroke:.25px #111;">25.5</div>
<div class="t" style="left:401.30px;top:359px;font-size:15px;color:#111;width:124.40000000000003px;text-align:right;letter-spacing:0.0px;-webkit-text-stroke:.25px #111;">18<span style="padding:0 1.25px">/</span>02<span style="padding:0 1.25px">/</span>2024</div>
<div class="t" style="left:531.50px;top:359px;font-size:15px;color:#111;letter-spacing:0.25px;-webkit-text-stroke:.25px #111;">Pending</div>
<div class="t" style="left:603.30px;top:359px;font-size:15px;color:#111;letter-spacing:0.25px;-webkit-text-stroke:.25px #111;">Medium</div>
<div class="t" style="left:667.30px;top:359px;font-size:15px;color:#111;letter-spacing:0.25px;-webkit-text-stroke:.25px #111;">South</div>
<div class="t" style="left:722.40px;top:359px;font-size:15px;color:#111;letter-spacing:0.25px;-webkit-text-stroke:.25px #111;">Blue</div>
<div class="t" style="left:-23.00px;top:382px;font-size:15px;color:#111;width:103.3px;text-align:right;letter-spacing:0.0px;-webkit-text-stroke:.25px #111;">1009</div>
<div class="t" style="left:86.10px;top:382px;font-size:15px;color:#111;letter-spacing:0.221px;-webkit-text-stroke:.25px #111;">Michael Lee</div>
<div class="t" style="left:205.30px;top:382px;font-size:15px;color:#111;letter-spacing:0.25px;-webkit-text-stroke:.25px #111;">Sofa</div>
<div class="t" style="left:297.30px;top:382px;font-size:15px;color:#111;letter-spacing:0.25px;-webkit-text-stroke:.25px #111;">Furniture</div>
<div class="t" style="left:337.30px;top:382px;font-size:15px;color:#111;width:101.0px;text-align:right;letter-spacing:0.0px;-webkit-text-stroke:.25px #111;">899</div>
<div class="t" style="left:401.30px;top:382px;font-size:15px;color:#111;width:124.40000000000003px;text-align:right;letter-spacing:0.0px;-webkit-text-stroke:.25px #111;">02<span style="padding:0 1.25px">/</span>04<span style="padding:0 1.25px">/</span>2024</div>
<div class="t" style="left:531.50px;top:382px;font-size:15px;color:#111;letter-spacing:0.25px;-webkit-text-stroke:.25px #111;">Delivered</div>
<div class="t" style="left:603.30px;top:382px;font-size:15px;color:#111;letter-spacing:0.25px;-webkit-text-stroke:.25px #111;">High</div>
<div class="t" style="left:667.30px;top:382px;font-size:15px;color:#111;letter-spacing:0.25px;-webkit-text-stroke:.25px #111;">East</div>
<div class="t" style="left:722.40px;top:382px;font-size:15px;color:#111;letter-spacing:0.25px;-webkit-text-stroke:.25px #111;">Yellow</div>
<div class="t" style="left:-23.00px;top:404px;font-size:15px;color:#111;width:103.3px;text-align:right;letter-spacing:0.0px;-webkit-text-stroke:.25px #111;">1010</div>
<div class="t" style="left:86.10px;top:404px;font-size:15px;color:#111;letter-spacing:0.270px;-webkit-text-stroke:.25px #111;">Emily Adams</div>
<div class="t" style="left:205.30px;top:404px;font-size:15px;color:#111;letter-spacing:0.25px;-webkit-text-stroke:.25px #111;">Table</div>
<div class="t" style="left:297.30px;top:404px;font-size:15px;color:#111;letter-spacing:0.25px;-webkit-text-stroke:.25px #111;">Furniture</div>
<div class="t" style="left:337.30px;top:404px;font-size:15px;color:#111;width:101.0px;text-align:right;letter-spacing:0.0px;-webkit-text-stroke:.25px #111;">350</div>
<div class="t" style="left:401.30px;top:404px;font-size:15px;color:#111;width:124.40000000000003px;text-align:right;letter-spacing:0.0px;-webkit-text-stroke:.25px #111;">28<span style="padding:0 1.25px">/</span>03<span style="padding:0 1.25px">/</span>2024</div>
<div class="t" style="left:531.50px;top:404px;font-size:15px;color:#111;letter-spacing:0.25px;-webkit-text-stroke:.25px #111;">Shipped</div>
<div class="t" style="left:603.30px;top:404px;font-size:15px;color:#111;letter-spacing:0.25px;-webkit-text-stroke:.25px #111;">Low</div>
<div class="t" style="left:667.30px;top:404px;font-size:15px;color:#111;letter-spacing:0.25px;-webkit-text-stroke:.25px #111;">West</div>
<div class="t" style="left:722.40px;top:404px;font-size:15px;color:#111;letter-spacing:0.25px;-webkit-text-stroke:.25px #111;">Red</div>
<div class="a dlg"><div class="a" style="left:0;top:0;width:563px;height:28px;background:linear-gradient(90deg,#e5f8f1 0%,#e9f8f2 45%,#f2f5ee 78%,#f5f5ef 100%)"></div></div>
<svg style="left:772px;top:285.5px" width="11" height="11"><path d="M0.5 0.5 L10 10 M10 0.5 L0.5 10" stroke="#222" stroke-width="1.1" fill="none"/></svg>
<div class="btn" style="left:244px;top:313px;width:77.1px;height:24px;"></div>
<div class="btn" style="left:324px;top:313px;width:87.6px;height:24px;"></div>
<div class="btn" style="left:415px;top:313px;width:82.6px;height:24px;"></div>
<div class="btn" style="left:502px;top:313px;width:22.6px;height:24px;"></div>
<div class="btn" style="left:528px;top:313px;width:22.99999999999998px;height:24px;"></div>
<div class="btn" style="left:554px;top:313px;width:59.6px;height:24px;"></div>
<div class="a" style="left:499px;top:312.5px;width:1.3px;height:26px;background:#111"></div>
<svg style="left:251.4px;top:317px" width="14" height="14.4"><path d="M7 0 V14.4 M0 7.2 H14" stroke="#2e9e4f" stroke-width="1.3" fill="none"/></svg>
<svg style="left:334px;top:320px" width="11" height="11"><path d="M0.5 0.5 L10.5 10.5 M10.5 0.5 L0.5 10.5" stroke="#e03a3a" stroke-width="1.3" fill="none"/></svg>
<svg style="left:422.5px;top:317px" width="17" height="16"><path d="M0.6 0.6 H7.6 V12.4 H0.6 Z" fill="#fdfdfd" stroke="#444" stroke-width="1"/><path d="M4.8 3.8 H10.4 L14 7.4 V15.4 H4.8 Z" fill="#fdfdfd" stroke="#444" stroke-width="1"/><path d="M10.4 3.8 V7.4 H14" fill="none" stroke="#444" stroke-width=".8"/><path d="M7.2 9.6 H11.6 M7.2 11.5 H11.6 M7.2 13.3 H11.6" stroke="#555" stroke-width=".8"/></svg>
<svg style="left:508px;top:322.5px" width="11" height="6.5"><path d="M1 5.5 L5.5 1 L10 5.5" fill="none" stroke="#b5b5b5" stroke-width="1.2" stroke-linecap="round" stroke-linejoin="round"/></svg>
<svg style="left:534.2px;top:323px" width="11" height="6.5"><path d="M1 1 L5.5 5.5 L10 1" fill="none" stroke="#b5b5b5" stroke-width="1.2" stroke-linecap="round" stroke-linejoin="round"/></svg>
<div class="a" style="left:680px;top:318.5px;width:12px;height:12px;border-radius:3px;background:#1767c0"></div>
<svg style="left:682px;top:321px" width="9" height="8"><path d="M1 3.6 L3.3 6 L7.6 1.2" stroke="#fff" stroke-width="1.3" fill="none" stroke-linecap="round" stroke-linejoin="round"/></svg>
<div class="a hl" style="left:666px;top:309.7px;width:129.4px;height:28.1px"></div>
<div class="a" style="left:243.3px;top:340.4px;width:552px;height:160.4px;background:#fff;border:1px solid #a4a8b3;border-right-color:#c6c8ce;border-bottom-color:#c0c2c9"></div>
<div class="a" style="left:244.3px;top:362.2px;width:550px;height:19.6px;background:#dedee4"></div>
<div class="a" style="left:430.2px;top:343.5px;width:1px;height:18.7px;background:#e6e6e6"></div>
<div class="a" style="left:616px;top:343.5px;width:1px;height:18.7px;background:#e6e6e6"></div>
<div class="combo" style="left:290.5px;width:130.5px"><i></i></div>
<svg style="left:407.4px;top:370px" width="9.4" height="5.8"><path d="M1 1 L4.7 4.8 L8.4 1" fill="none" stroke="#5a5a5a" stroke-width="1" stroke-linecap="round" stroke-linejoin="round"/></svg>
<div class="combo" style="left:431.3px;width:175.7px"><i></i></div>
<svg style="left:593.4px;top:370px" width="9.4" height="5.8"><path d="M1 1 L4.7 4.8 L8.4 1" fill="none" stroke="#5a5a5a" stroke-width="1" stroke-linecap="round" stroke-linejoin="round"/></svg>
<div class="combo" style="left:617.3px;width:175.5px"><i></i></div>
<svg style="left:779.1999999999999px;top:370px" width="9.4" height="5.8"><path d="M1 1 L4.7 4.8 L8.4 1" fill="none" stroke="#5a5a5a" stroke-width="1" stroke-linecap="round" stroke-linejoin="round"/></svg>
<div class="a" style="left:292.5px;top:365.5px;width:1px;height:14px;background:#3c78d8"></div>
<div class="a hl" style="left:244px;top:341px;width:554px;height:65px;border-width:2.3px"></div>
<div class="btn" style="left:652px;top:505px;width:65.99999999999997px;height:21.5px;border-color:#1767c0;border-width:1.3px;"></div>
<div class="btn" style="left:728px;top:505px;width:66.6px;height:21.5px;"></div>
<div class="a hl" style="left:644px;top:501px;width:81.4px;height:28.6px"></div>
<div class="a" style="left:797px;top:528px;width:1.5px;height:1.5px;background:#bdbdbd"></div>
<div class="a" style="left:794px;top:528px;width:1.5px;height:1.5px;background:#bdbdbd"></div>
<div class="a" style="left:797px;top:525px;width:1.5px;height:1.5px;background:#bdbdbd"></div>
<div class="a" style="left:791px;top:528px;width:1.5px;height:1.5px;background:#bdbdbd"></div>
<div class="a" style="left:794px;top:525px;width:1.5px;height:1.5px;background:#bdbdbd"></div>
<div class="a" style="left:797px;top:522px;width:1.5px;height:1.5px;background:#bdbdbd"></div>
<div class="t" style="left:245.80px;top:282px;font-size:11.5px;color:#1f1f1f;letter-spacing:0.035px;">Sort</div>
<div class="t" style="left:731.80px;top:281px;font-size:11px;color:#222;">?</div>
<div class="t" style="left:269.00px;top:316px;font-size:10px;color:#1f1f1f;letter-spacing:-0.061px;"><u>A</u>dd Level</div>
<div class="t" style="left:350.00px;top:316px;font-size:10px;color:#1f1f1f;letter-spacing:-0.145px;"><u>D</u>elete Level</div>
<div class="t" style="left:441.00px;top:316px;font-size:10px;color:#1f1f1f;letter-spacing:-0.170px;"><u>C</u>opy Level</div>
<div class="t" style="left:563.00px;top:316px;font-size:10px;color:#1f1f1f;letter-spacing:-0.035px;"><u>O</u>ptions...</div>
<div class="t" style="left:698.50px;top:316px;font-size:10px;color:#1f1f1f;letter-spacing:0.051px;">My data has <u>h</u>eaders</div>
<div class="t" style="left:248.50px;top:343px;font-size:10px;color:#1f1f1f;letter-spacing:-0.194px;">Column</div>
<div class="t" style="left:434.50px;top:343px;font-size:10px;color:#1f1f1f;letter-spacing:0.005px;">Sort On</div>
<div class="t" style="left:620.50px;top:343px;font-size:10px;color:#1f1f1f;letter-spacing:0.234px;">Order</div>
<div class="t" style="left:246.00px;top:361px;font-size:10px;color:#1f1f1f;letter-spacing:0.052px;">Sort by</div>
<div class="t" style="left:294.00px;top:363px;font-size:10px;color:#1f1f1f;letter-spacing:0.059px;">Order Date</div>
<div class="t" style="left:434.50px;top:363px;font-size:10px;color:#1f1f1f;letter-spacing:-0.184px;">Cell Values</div>
<div class="t" style="left:620.50px;top:363px;font-size:10px;color:#1f1f1f;letter-spacing:0.090px;">Oldest to Newest</div>
<div class="t" style="left:678.80px;top:507px;font-size:10px;color:#1f1f1f;letter-spacing:-1.053px;">OK</div>
<div class="t" style="left:746.80px;top:507px;font-size:10px;color:#1f1f1f;letter-spacing:-0.348px;">Cancel</div>
</div></body></html>
